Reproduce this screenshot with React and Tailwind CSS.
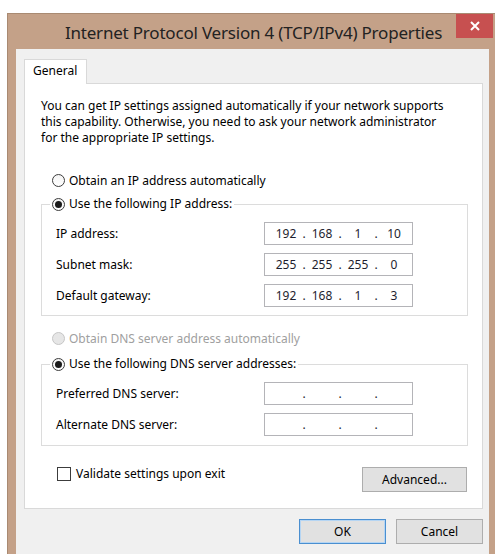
import React from 'react'

// Win8-style "IPv4 Properties" dialog
const ui = { fontFamily: '"Noto Sans", "Open Sans", sans-serif' }

const Radio = ({ checked, disabled }) => (
  <span
    className={`flex items-center justify-center w-[13px] h-[13px] rounded-full border shrink-0 ${
      disabled ? 'border-[#c6c6c6] bg-[#e6e6e6]' : 'border-[#3c3c3c] bg-gradient-to-b from-[#f4f4f4] to-white'
    }`}
  >
    {checked && <span className="w-[7px] h-[7px] rounded-full bg-[#1b1b1b]" />}
  </span>
)

const RadioRow = ({ checked, disabled, children }) => (
  <label className={`flex items-center gap-[4px] h-[16px] ${disabled ? 'text-[#a0a0a0]' : 'text-black'}`}>
    <Radio checked={checked} disabled={disabled} />
    <span>{children}</span>
  </label>
)

const IpField = ({ parts = ['', '', '', ''] }) => (
  <div className="flex items-center h-[23px] w-[149px] border border-[#b4b4b8] bg-white pl-[5px] text-[#1e1e2e]">
    {parts.map((p, i) => (
      <React.Fragment key={i}>
        <span className="w-[32px] text-center">{p}</span>
        {i < 3 && <span className="w-[4px] text-center">.</span>}
      </React.Fragment>
    ))}
  </div>
)

const FieldRow = ({ label, parts }) => (
  <div className="flex items-center">
    <span className="w-[208px]">{label}</span>
    <IpField parts={parts} />
  </div>
)

const GroupBox = ({ legend, children, className = '' }) => (
  <fieldset className={`border border-[#dcdcdc] ${className}`}>
    <legend className="ml-[8px] px-[2px] leading-[16px]">{legend}</legend>
    {children}
  </fieldset>
)

const Button = ({ children, primary, className = '' }) => (
  <button
    className={`h-[25px] border bg-[#e1e1e1] text-black ${
      primary ? 'border-[#4a8fd0] shadow-[inset_0_0_0_1px_#b5d5f3]' : 'border-[#adadad]'
    } ${className}`}
  >
    {children}
  </button>
)

export default function App() {
  return (
    <div className="min-h-[554px] bg-white pt-[13px] pl-[7px] text-[12px] leading-[15px]" style={ui}>
      <div className="w-[488px] h-[541px] bg-[#c4a188] border-l border-t border-[#a98a72] flex flex-col">
        {/* title bar */}
        <div className="flex items-start h-[35px]">
          <div className="flex-1 text-center whitespace-nowrap pl-[43px] pt-[7px] text-[17px] leading-[24px] tracking-[-0.2px] text-[#222]">
            Internet Protocol Version 4 (TCP/IPv4) Properties
          </div>
          <button className="w-[37px] h-[24px] mr-[2px] bg-[#c75050] flex items-center justify-center">
            <svg width="10" height="10" viewBox="0 0 10 10">
              <path d="M1 1L9 9M9 1L1 9" stroke="white" strokeWidth="2" />
            </svg>
          </button>
        </div>

        {/* client area */}
        <div className="flex-1 ml-[8px] mr-[6px] bg-[#f0f0f0] pt-[10px] pl-[8px] pr-[6px]">
          <div className="relative z-10 -mb-px w-[63px] h-[25px] bg-white border border-b-0 border-[#d9d9d9] pl-[8px] pt-[3px] leading-[16px]">
            General
          </div>
          <div className="bg-white border border-[#d9d9d9] pl-[16px] pr-[14px] pt-[14px] pb-[16px]">
            <p className="whitespace-nowrap leading-[16px]">
              You can get IP settings assigned automatically if your network supports
              <br />
              this capability. Otherwise, you need to ask your network administrator
              <br />
              for the appropriate IP settings.
            </p>

            <div className="mt-[26px] pl-[11px]">
              <RadioRow>Obtain an IP address automatically</RadioRow>
            </div>

            <GroupBox
              className="mt-[8px] pb-[8px]"
              legend={<RadioRow checked>Use the following IP address:</RadioRow>}
            >
              <div className="flex flex-col gap-[8px] pt-[10px] pl-[14px]">
                <FieldRow label="IP address:" parts={['192', '168', '1', '10']} />
                <FieldRow label="Subnet mask:" parts={['255', '255', '255', '0']} />
                <FieldRow label="Default gateway:" parts={['192', '168', '1', '3']} />
              </div>
            </GroupBox>

            <div className="mt-[14px] pl-[11px]">
              <RadioRow disabled>Obtain DNS server address automatically</RadioRow>
            </div>

            <GroupBox
              className="mt-[10px] pb-[9px]"
              legend={<RadioRow checked>Use the following DNS server addresses:</RadioRow>}
            >
              <div className="flex flex-col gap-[8px] pt-[10px] pl-[14px]">
                <FieldRow label="Preferred DNS server:" />
                <FieldRow label="Alternate DNS server:" />
              </div>
            </GroupBox>

            <div className="flex items-start justify-between">
              <label className="flex items-center gap-[5px] mt-[20px] ml-[16px]">
                <span className="w-[14px] h-[14px] border border-[#3c3c3c] bg-white" />
                <span>Validate settings upon exit</span>
              </label>
              <Button className="mt-[21px] mr-[1px] w-[105px]">Advanced...</Button>
            </div>
          </div>

          <div className="flex justify-end gap-[10px] mt-[10px]">
            <Button primary className="w-[87px]">OK</Button>
            <Button className="w-[87px]">Cancel</Button>
          </div>
        </div>
      </div>
    </div>
  )
}
